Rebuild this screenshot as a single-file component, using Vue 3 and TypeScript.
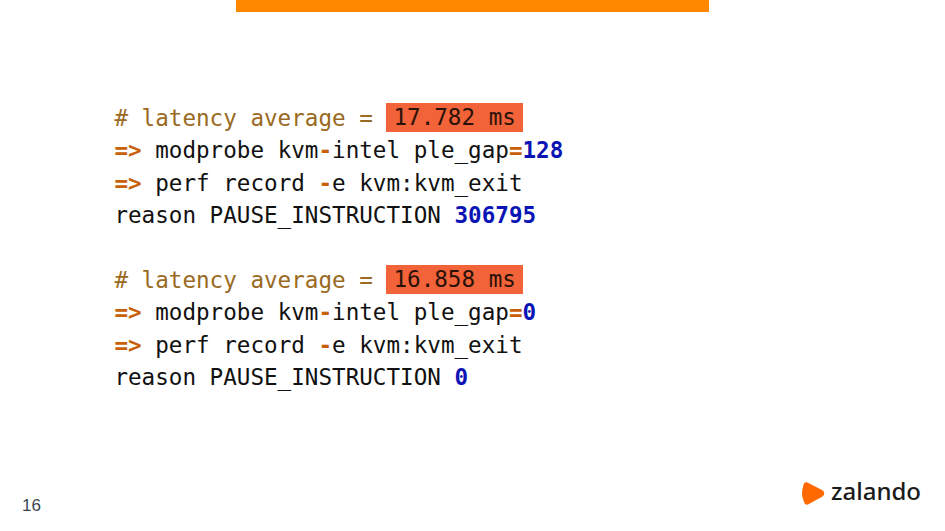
<script setup lang="ts">
type Seg = { t: string; c?: string }
const blocks: Seg[][][] = [
  [
    [{ t: '# latency average = ', c: 'com' }, { t: '17.782 ms', c: 'hl' }],
    [{ t: '=>', c: 'op' }, { t: ' modprobe kvm' }, { t: '-', c: 'op' }, { t: 'intel ple_gap' }, { t: '=', c: 'op' }, { t: '128', c: 'num' }],
    [{ t: '=>', c: 'op' }, { t: ' perf record ' }, { t: '-', c: 'op' }, { t: 'e kvm:kvm_exit' }],
    [{ t: 'reason PAUSE_INSTRUCTION ' }, { t: '306795', c: 'num' }],
  ],
  [
    [{ t: '# latency average = ', c: 'com' }, { t: '16.858 ms', c: 'hl' }],
    [{ t: '=>', c: 'op' }, { t: ' modprobe kvm' }, { t: '-', c: 'op' }, { t: 'intel ple_gap' }, { t: '=', c: 'op' }, { t: '0', c: 'num' }],
    [{ t: '=>', c: 'op' }, { t: ' perf record ' }, { t: '-', c: 'op' }, { t: 'e kvm:kvm_exit' }],
    [{ t: 'reason PAUSE_INSTRUCTION ' }, { t: '0', c: 'num' }],
  ],
]
</script>

<template>
  <div class="slide">
    <div class="bar"></div>
    <main class="code">
      <section v-for="(b, i) in blocks" :key="i" class="block">
        <div v-for="(line, j) in b" :key="j" class="line">
          <span v-for="(s, k) in line" :key="k" :class="s.c">{{ s.t }}</span>
        </div>
      </section>
    </main>
    <footer class="foot">
      <span class="page">16</span>
      <div class="logo">
        <svg width="23" height="23" viewBox="0 0 23 23" aria-hidden="true">
          <path d="M1.5 3C1.8 1 3.5-.2 5.5.6L20 8c2.8 1.6 3 4.6.5 6.5L6.5 22.3c-2 .9-3.7.1-4.3-1.7C1 17 0 14.5 0 11.5 0 8.5.8 6 1.5 3z" fill="#ff6900"/>
        </svg>
        <span class="word">zalando</span>
      </div>
    </footer>
  </div>
</template>

<style>
html, body { margin: 0; background: #fff; }
</style>

<style scoped>
.slide {
  width: 945px;
  height: 531px;
  display: flex;
  flex-direction: column;
  overflow: hidden;
  background: #fff;
}
.bar {
  width: 473px;
  height: 12px;
  margin-left: 236px;
  background: #ff8800;
  flex: none;
}
.code {
  flex: 1;
  padding: 90px 0 0 114.4px;
  font-family: "DejaVu Sans Mono", monospace;
  font-size: 22.6px;
  color: #111;
}
.block { margin-bottom: 32.4px; }
.line {
  height: 32.4px;
  line-height: 32.4px;
  white-space: pre;
}
.com { color: #9a6a22; }
.op { color: #c8600a; font-weight: 700; }
.num { color: #0a14b4; font-weight: 700; }
.hl {
  display: inline-block;
  height: 29px;
  line-height: 29px;
  padding: 0 7px;
  background: #f2633a;
  color: #2a1208;
  vertical-align: 1px;
}
.foot {
  flex: none;
  display: flex;
  justify-content: space-between;
  align-items: center;
  height: 36px;
  padding: 0 24px 20px 22px;
}
.page {
  align-self: flex-end;
  margin-bottom: -4px;
  font-family: "Liberation Sans", sans-serif;
  font-size: 17px;
  line-height: 18px;
  color: #3a4650;
}
.logo { display: flex; align-items: center; gap: 6px; }
.word {
  font-family: "Noto Sans", sans-serif;
  font-size: 24px;
  font-weight: 500;
  line-height: 28px;
  margin-bottom: 4px;
  color: #1a1a1a;
}
</style>
